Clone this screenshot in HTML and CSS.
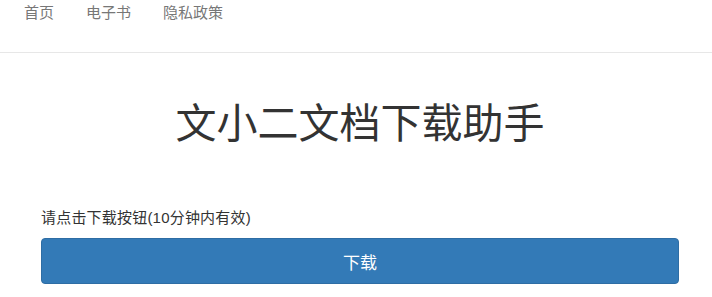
FILE: index.html
```html
<!DOCTYPE html>
<html lang="zh-CN">
<head>
<meta charset="utf-8">
<title>文小二文档下载助手</title>
<link rel="stylesheet" href="styles.css">
</head>
<body>
<nav class="navbar">
  <a class="nav-link" href="#">首页</a>
  <a class="nav-link" href="#">电子书</a>
  <a class="nav-link" href="#">隐私政策</a>
</nav>
<main class="content">
  <h1 class="title">文小二文档下载助手</h1>
  <p class="hint">请点击下载按钮(10分钟内有效)</p>
  <button class="btn-download" type="button">下载</button>
</main>
</body>
</html>
```
FILE: styles.css
```css
html, body {
  margin: 0;
  padding: 0;
  background: #ffffff;
}
body {
  font-family: "Liberation Sans", "Noto Sans CJK SC", sans-serif;
  color: #333333;
}
.navbar {
  display: flex;
  height: 52px;
  padding: 0 0 0 8px;
  border-bottom: 1px solid #e7e7e7;
}
.nav-link {
  display: block;
  padding: 2px 16px 0;
  height: 22px;
  line-height: 22px;
  font-size: 15px;
  color: #777777;
  text-decoration: none;
}
.content {
  padding: 0 33px 0 41px;
  display: flex;
  flex-direction: column;
}
.title {
  margin: 47px 0 0;
  font-size: 41px;
  line-height: 48px;
  font-weight: normal;
  text-align: center;
  color: #333333;
}
.hint {
  margin: 60px 0 0;
  font-size: 15px;
  line-height: 20px;
  letter-spacing: 0.2px;
  color: #333333;
}
.btn-download {
  margin-top: 10px;
  height: 46px;
  border: 1px solid #2e6da4;
  border-radius: 4px;
  background: #337ab7;
  color: #ffffff;
  font-family: "Liberation Sans", "Noto Sans CJK SC", sans-serif;
  font-size: 17px;
  cursor: pointer;
}
```
